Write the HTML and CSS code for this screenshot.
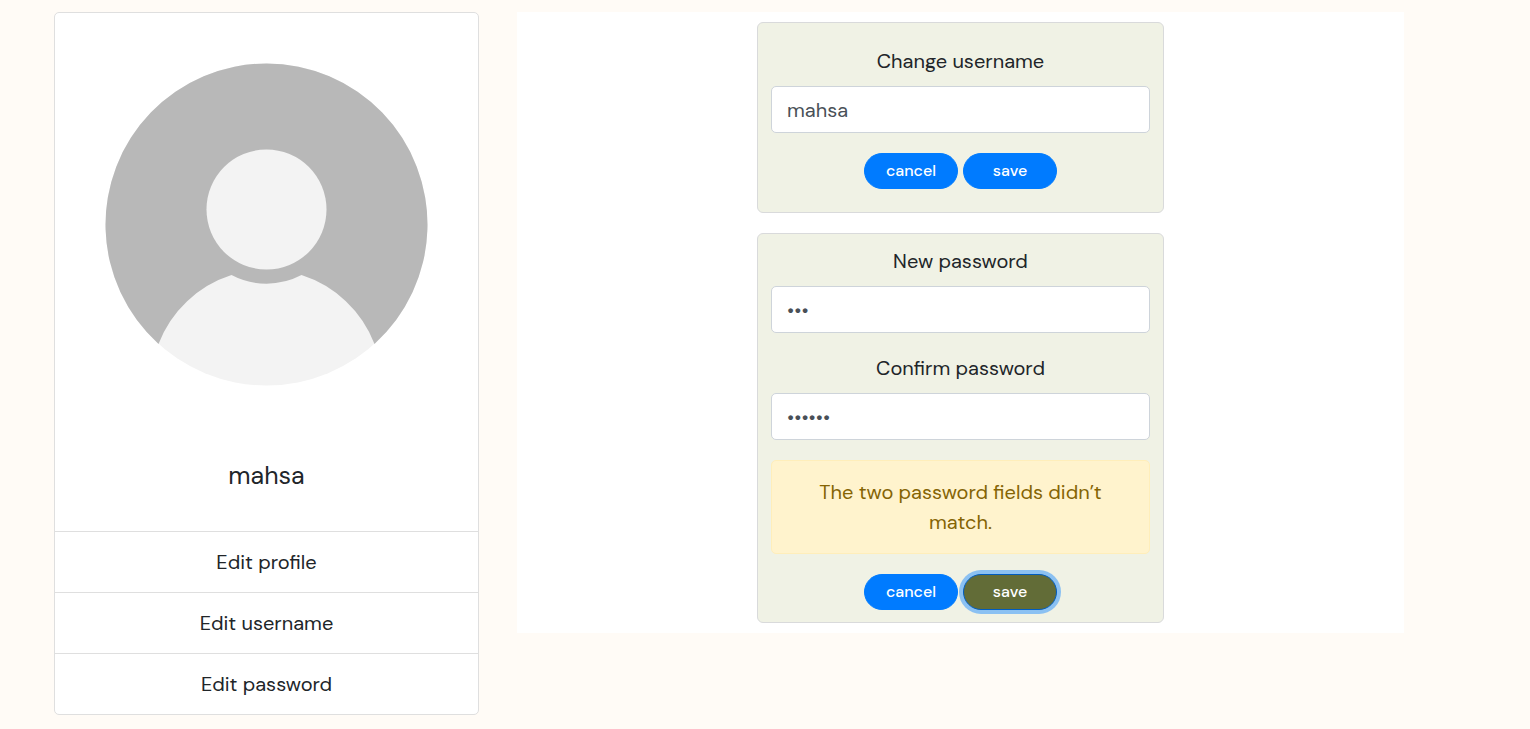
FILE: index.html
```html
<!DOCTYPE html>
<html lang="en">
<head>
<meta charset="utf-8">
<meta name="viewport" content="width=device-width, initial-scale=1">
<title>Profile</title>
<link rel="stylesheet" href="styles.css">
</head>
<body>
<div class="page">
  <aside class="profile">
    <svg class="avatar" viewBox="0 0 423 423" role="img" aria-label="Profile picture">
      <circle cx="211.5" cy="211.5" r="161" fill="#f3f3f3"/>
      <path fill="#b8b8b8" d="M103.5 330.9A161 161 0 1 1 319.5 330.9A116 116 0 0 0 246.5 262A75 75 0 0 1 176.5 262A116 116 0 0 0 103.5 330.9Z"/>
      <circle cx="211.5" cy="196.5" r="60" fill="#f3f3f3"/>
    </svg>
    <h1 class="profile-name">mahsa</h1>
    <nav class="profile-links">
      <a href="#profile">Edit profile</a>
      <a href="#username">Edit username</a>
      <a href="#password">Edit password</a>
    </nav>
  </aside>
  <main class="content">
    <form class="card card-roomy" id="username">
      <div class="field">
        <label for="name">Change username</label>
        <input id="name" type="text" value="mahsa">
      </div>
      <div class="actions">
        <button class="btn" type="button">cancel</button>
        <button class="btn" type="button">save</button>
      </div>
    </form>
    <form class="card" id="password">
      <div class="field">
        <label for="new-password">New password</label>
        <input id="new-password" type="password" value="abc">
      </div>
      <div class="field">
        <label for="confirm-password">Confirm password</label>
        <input id="confirm-password" type="password" value="abcdef">
      </div>
      <p class="alert" role="alert">The two password fields didn’t match.</p>
      <div class="actions">
        <button class="btn" type="button">cancel</button>
        <button class="btn btn-active" type="button">save</button>
      </div>
    </form>
  </main>
</div>
</body>
</html>
```
FILE: styles.css
```css
* {
  box-sizing: border-box;
}

body {
  margin: 0;
  background: #fffbf6;
  color: #212529;
  font-family: "DM Sans", Inter, "Open Sans", sans-serif;
  font-size: 20px;
  line-height: 30px;
}

.page {
  display: grid;
  grid-template-columns: minmax(0, 425fr) minmax(0, 887fr);
  align-items: start;
  gap: 38px;
  padding: 12px 126px 14px 54px;
}

.profile {
  background: #fff;
  border: 1px solid #dfdfdf;
  border-radius: 5px;
  text-align: center;
}

.avatar {
  display: block;
  width: 100%;
}

.profile-name {
  margin: 0;
  padding: 21px 20px 36px;
  font-size: 25px;
  font-weight: 400;
  line-height: 38px;
}

.profile-links a {
  display: block;
  padding: 15px 20px;
  border-top: 1px solid #dfdfdf;
  color: inherit;
  text-decoration: none;
}

.content {
  display: flex;
  flex-direction: column;
  align-items: center;
  gap: 20px;
  padding: 10px;
  background: #fff;
}

.card {
  display: flex;
  flex-direction: column;
  gap: 20px;
  width: 100%;
  max-width: 407px;
  padding: 12px 13px;
  background: #f0f2e5;
  border: 1px solid #d9dadb;
  border-radius: 6px;
}

.card-roomy {
  padding-top: 23px;
  padding-bottom: 23px;
}

.field {
  display: flex;
  flex-direction: column;
  gap: 10px;
  text-align: center;
}

.field input {
  width: 100%;
  height: 47px;
  padding: 0 15px;
  border: 1px solid #ced4da;
  border-radius: 5px;
  background: #fff;
  color: #495057;
  font: inherit;
}

.alert {
  margin: 0;
  padding: 16px 24px;
  border: 1px solid #ffeeba;
  border-radius: 5px;
  background: #fff3cd;
  color: #856404;
  text-align: center;
}

.actions {
  display: flex;
  justify-content: center;
  gap: 5px;
}

.btn {
  width: 94px;
  height: 36px;
  padding: 0;
  border: 1px solid #007bff;
  border-radius: 18px;
  background: #007bff;
  color: #fff;
  font: inherit;
  font-size: 16px;
  font-weight: 500;
}

.btn-active {
  border-color: #005cbf;
  background: #626c37;
  box-shadow: 0 0 0 4px rgba(38, 143, 255, 0.5);
}
```
